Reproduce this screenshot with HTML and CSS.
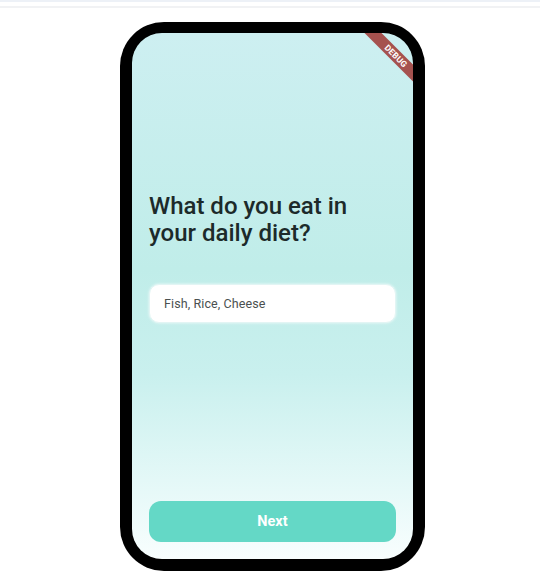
FILE: index.html
```html
<!DOCTYPE html>
<html lang="en">
<head>
<meta charset="utf-8">
<title>Diet</title>
<link rel="stylesheet" href="styles.css">
</head>
<body>
<div class="topbar"></div>
<div class="topline"></div>
<div class="phone">
  <div class="screen">
    <div class="banner"><span>DEBUG</span></div>
    <h1 class="question">What do you eat in<br>your daily diet?</h1>
    <div class="field">Fish, Rice, Cheese</div>
    <button class="next">Next</button>
  </div>
</div>
</body>
</html>
```
FILE: styles.css
```css
html, body {
  margin: 0;
  padding: 0;
  background: #ffffff;
}
body {
  font-family: Roboto, "Liberation Sans", sans-serif;
  width: 540px;
  height: 573px;
  overflow: hidden;
}
.topbar {
  height: 2px;
  background: #edf1f7;
}
.topline {
  height: 2px;
  margin-top: 4px;
  background: #f1f2f4;
}
.phone {
  box-sizing: border-box;
  width: 305px;
  height: 549px;
  margin: 14px 0 0 120px;
  background: #000;
  border-radius: 44px;
  padding: 11px 12px 12px 12px;
  display: flex;
}
.screen {
  position: relative;
  flex: 1;
  border-radius: 30px;
  overflow: hidden;
  background: linear-gradient(to bottom, #cdeff1 0%, #c0ede9 45%, #c9f0ee 65%, #f8fefe 100%);
  display: flex;
  flex-direction: column;
  padding: 0 17px;
}
.banner {
  position: absolute;
  left: 202px;
  top: 17px;
  width: 124px;
  height: 12px;
  background: #a5524f;
  transform: rotate(45deg);
  display: flex;
  align-items: center;
  justify-content: center;
}
.banner span {
  color: #fff;
  font-size: 8.5px;
  font-weight: 700;
  letter-spacing: 0.2px;
}
.question {
  margin: 160px 0 0 0;
  font-size: 24px;
  line-height: 27px;
  font-weight: 500;
  color: #1c2a2a;
}
.field {
  margin-top: 37px;
  height: 39px;
  box-sizing: border-box;
  background: #fff;
  border: 1px solid #e2f5f4;
  border-radius: 10px;
  box-shadow: 0 0 3px rgba(255,255,255,0.8);
  display: flex;
  align-items: center;
  padding-left: 14px;
  font-size: 12.5px;
  letter-spacing: 0.1px;
  color: #4a5050;
}
.next {
  margin-top: auto;
  margin-bottom: 17px;
  height: 41px;
  border: none;
  border-radius: 12px;
  background: #64d8c6;
  color: #fff;
  font-family: Roboto, "Liberation Sans", sans-serif;
  font-size: 14.5px;
  font-weight: 700;
}
```
